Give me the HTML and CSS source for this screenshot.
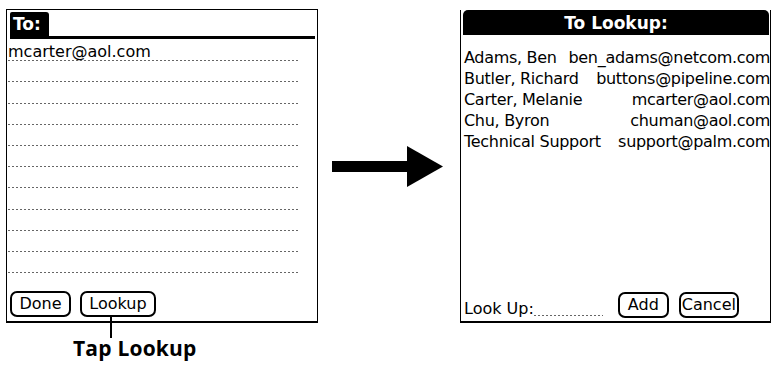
FILE: index.html
```html
<!DOCTYPE html>
<html>
<head>
<meta charset="utf-8">
<title>Tap Lookup</title>
<link rel="stylesheet" href="styles.css">
</head>
<body>
<div class="stage">

  <div class="left-col">
    <div class="screen screen-compose">
      <div class="to-row">
        <div class="to-tab">To:</div>
        <div class="to-rule"></div>
      </div>
      <div class="lines">
        <div class="line">mcarter@aol.com</div>
        <div class="line"></div>
        <div class="line"></div>
        <div class="line"></div>
        <div class="line"></div>
        <div class="line"></div>
        <div class="line"></div>
        <div class="line"></div>
        <div class="line"></div>
        <div class="line"></div>
        <div class="line"></div>
      </div>
      <div class="buttons">
        <span class="btn btn-done">Done</span>
        <span class="btn btn-lookup">Lookup</span>
      </div>
    </div>
    <div class="caption">Tap Lookup</div>
  </div>

  <div class="arrow">
    <svg width="142" height="42" viewBox="0 0 142 42">
      <rect x="14" y="15" width="76" height="11" fill="#000"/>
      <polygon points="89,0 125,20.5 89,41" fill="#000"/>
    </svg>
  </div>

  <div class="screen screen-lookup">
    <div class="title">To Lookup:</div>
    <ul class="contacts">
      <li><span>Adams, Ben</span><span>ben_adams@netcom.com</span></li>
      <li><span>Butler, Richard</span><span>buttons@pipeline.com</span></li>
      <li><span>Carter, Melanie</span><span>mcarter@aol.com</span></li>
      <li><span>Chu, Byron</span><span>chuman@aol.com</span></li>
      <li><span>Technical Support</span><span>support@palm.com</span></li>
    </ul>
    <div class="lookup-bar">
      <span class="label">Look Up:</span>
      <span class="field"></span>
      <span class="btn btn-add">Add</span>
      <span class="btn btn-cancel">Cancel</span>
    </div>
  </div>

</div>
</body>
</html>
```

FILE: styles.css
```css
body {
   margin: 0;
   width: 771px;
   height: 365px;
   overflow: hidden;
   background-color: white;
   color: #000;
   font-family: "DejaVu Sans", sans-serif;
   font-size: 16px;
}

.stage {
   display: flex;
   align-items: flex-start;
}

/* shared palm screen bits */

.screen {
   box-sizing: border-box;
   display: flex;
   flex-direction: column;
}

.btn {
   box-sizing: border-box;
   display: inline-block;
   height: 26px;
   border: 2px solid #000;
   border-radius: 7px;
   line-height: 22px;
   text-align: center;
}

/* left screen */

.left-col {
   margin: 9px 0 0 6px;
   width: 312px;
}

.screen-compose {
   width: 312px;
   height: 314px;
   border: 1px solid #000;
   border-bottom-width: 2px;
}

.to-row {
   display: flex;
   align-items: flex-end;
   padding: 2px 2px 0 3px;
}

.to-tab {
   width: 39px;
   height: 27px;
   box-sizing: border-box;
   padding-left: 3px;
   background: #000;
   color: #fff;
   font-weight: bold;
   font-size: 17px;
   line-height: 25px;
   border-radius: 2px 3px 0 0;
}

.to-rule {
   flex: 1;
   height: 3px;
   background: #000;
}

.lines {
   padding: 1px 0 0 1px;
}

.line {
   width: 290px;
   height: 21.2px;
   line-height: 24px;
   background-image: repeating-linear-gradient(to right, #666 0 2px, transparent 2px 4px);
   background-size: 100% 1px;
   background-position: 0 100%;
   background-repeat: no-repeat;
}

.buttons {
   margin-top: auto;
   display: flex;
   gap: 9px;
   padding: 0 0 4px 3px;
}

.btn-done {
   width: 61px;
}

.btn-lookup {
   width: 76px;
   position: relative;
}

/* leader line from the button to the caption */
.btn-lookup::after {
   content: "";
   position: absolute;
   top: 100%;
   left: 28px;
   width: 2px;
   height: 21px;
   margin-top: 2px;
   background: #000;
}

.caption {
   margin-top: 15px;
   padding-left: 67px;
   font-family: "Open Sans", sans-serif;
   font-weight: bold;
   font-size: 21px;
   line-height: 21px;
   letter-spacing: 0.2px;
}

/* arrow */

.arrow {
   width: 142px;
   margin-top: 146px;
}

.arrow svg {
   display: block;
}

/* right screen */

.screen-lookup {
   width: 311px;
   height: 313px;
   margin-top: 10px;
   border-left: 1px solid #000;
   border-right: 1px solid #000;
   border-bottom: 2px solid #000;
}

.title {
   margin: 0 1px 0 2px;
   height: 25px;
   background: #000;
   color: #fff;
   font-weight: bold;
   font-size: 17px;
   line-height: 26px;
   text-align: center;
   border-radius: 5px 5px 0 0;
}

.contacts {
   list-style: none;
   margin: 12px 0 0;
   padding: 0 0 0 3px;
   letter-spacing: -0.3px;
}

.contacts li {
   display: flex;
   justify-content: space-between;
   line-height: 21px;
   white-space: nowrap;
}

.lookup-bar {
   margin-top: auto;
   display: flex;
   align-items: flex-end;
   padding: 0 0 3px 3px;
}

.label {
   line-height: 18px;
}

.field {
   width: 69px;
   height: 1px;
   margin-bottom: 2px;
   background-image: repeating-linear-gradient(to right, #666 0 2px, transparent 2px 4px);
}

.btn-add {
   width: 51px;
   margin-left: 15px;
}

.btn-cancel {
   width: 60px;
   margin-left: 10px;
}
```
